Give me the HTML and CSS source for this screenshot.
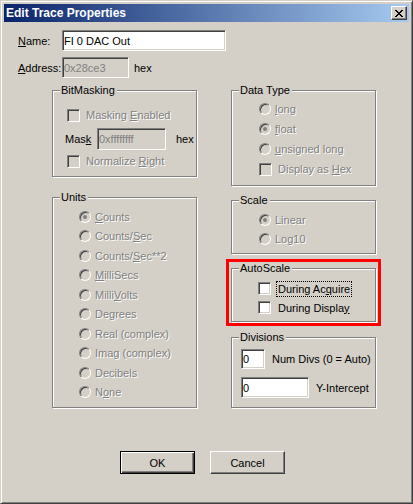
FILE: index.html
```html
<!DOCTYPE html>
<html lang="en">
  <head>
    <meta charset="UTF-8" />
    <title>Edit Trace Properties</title>
    <link rel="stylesheet" href="styles.css">
  </head>
  <body>
    <!-- dialog window -->
    <div class="window">
      <div class="caption">
        <span class="caption-title">Edit Trace Properties</span>
        <span class="caption-close">
          <svg width="8" height="7" viewBox="0 0 8 7" shape-rendering="crispEdges">
            <rect x="0" y="0" width="2" height="1" />
            <rect x="6" y="0" width="2" height="1" />
            <rect x="1" y="1" width="2" height="1" />
            <rect x="5" y="1" width="2" height="1" />
            <rect x="2" y="2" width="4" height="1" />
            <rect x="3" y="3" width="2" height="1" />
            <rect x="2" y="4" width="4" height="1" />
            <rect x="1" y="5" width="2" height="1" />
            <rect x="5" y="5" width="2" height="1" />
            <rect x="0" y="6" width="2" height="1" />
            <rect x="6" y="6" width="2" height="1" />
          </svg>
        </span>
      </div>

      <div class="dialog">
        <!-- name / address -->
        <div class="field-row">
          <span class="field-label"><u>N</u>ame:</span>
          <span class="edit name-edit">FI 0 DAC Out</span>
        </div>
        <div class="field-row address-row">
          <span class="field-label"><u>A</u>ddress:</span>
          <span class="edit edit-off address-edit">0x28ce3</span>
          <span class="unit">hex</span>
        </div>

        <!-- group boxes -->
        <div class="groups">
          <div class="col">
            <div class="group bitmask">
              <span class="legend">BitMasking</span>
              <div class="opt off">
                <span class="check"></span>
                <span class="opt-text">Masking <u>E</u>nabled</span>
              </div>
              <div class="mask-row">
                <span class="mask-label">Mas<u>k</u></span>
                <span class="edit edit-off mask-edit">0xffffffff</span>
                <span class="unit">hex</span>
              </div>
              <div class="opt off last">
                <span class="check"></span>
                <span class="opt-text">Normalize <u>R</u>ight</span>
              </div>
            </div>

            <div class="group units">
              <span class="legend">Units</span>
              <div class="opt off"><span class="radio on"></span><span class="opt-text"><u>C</u>ounts</span></div>
              <div class="opt off"><span class="radio"></span><span class="opt-text">Counts/<u>S</u>ec</span></div>
              <div class="opt off"><span class="radio"></span><span class="opt-text">Counts/<u>S</u>ec**2</span></div>
              <div class="opt off"><span class="radio"></span><span class="opt-text"><u>M</u>illiSecs</span></div>
              <div class="opt off"><span class="radio"></span><span class="opt-text">Milli<u>V</u>olts</span></div>
              <div class="opt off"><span class="radio"></span><span class="opt-text">Degrees</span></div>
              <div class="opt off"><span class="radio"></span><span class="opt-text">Real (complex)</span></div>
              <div class="opt off"><span class="radio"></span><span class="opt-text">Imag (complex)</span></div>
              <div class="opt off"><span class="radio"></span><span class="opt-text">Decibels</span></div>
              <div class="opt off"><span class="radio"></span><span class="opt-text">N<u>o</u>ne</span></div>
            </div>
          </div>

          <div class="col">
            <div class="group datatype">
              <span class="legend">Data Type</span>
              <div class="opt off"><span class="radio"></span><span class="opt-text"><u>l</u>ong</span></div>
              <div class="opt off"><span class="radio on"></span><span class="opt-text"><u>f</u>loat</span></div>
              <div class="opt off"><span class="radio"></span><span class="opt-text"><u>u</u>nsigned long</span></div>
              <div class="opt off"><span class="check"></span><span class="opt-text">Display as <u>H</u>ex</span></div>
            </div>

            <div class="group scale">
              <span class="legend">Scale</span>
              <div class="opt off"><span class="radio on"></span><span class="opt-text">Linear</span></div>
              <div class="opt off"><span class="radio"></span><span class="opt-text">Log10</span></div>
            </div>

            <!-- highlighted box (red frame) -->
            <div class="group autoscale">
              <span class="legend">AutoScale</span>
              <div class="opt"><span class="check"></span><span class="opt-text focus">During Ac<u>q</u>uire</span></div>
              <div class="opt"><span class="check"></span><span class="opt-text">During Displa<u>y</u></span></div>
            </div>

            <div class="group divisions">
              <span class="legend">Divisions</span>
              <div class="div-row">
                <span class="edit divs-edit">0</span>
                <span class="div-text">Num Divs (0 = Auto)</span>
              </div>
              <div class="div-row second">
                <span class="edit icpt-edit">0</span>
                <span class="div-text">Y-Intercept</span>
              </div>
            </div>
          </div>
        </div>

        <!-- buttons -->
        <div class="buttons">
          <span class="btn default">OK</span>
          <span class="btn">Cancel</span>
        </div>
      </div>
    </div>
  </body>
</html>
```
FILE: styles.css
```css
/* reset */
html,
body {
  margin: 0;
  padding: 0;
}

body {
  background-color: #d4d0c8;
  font-family: "Liberation Sans", Arial, sans-serif;
  font-size: 11px;
  color: #000;
}

/* window frame */
.window {
  box-sizing: border-box;
  width: 413px;
  height: 504px;
  padding: 3px;
  border: 1px solid;
  border-color: #d4d0c8 #404040 #404040 #d4d0c8;
  box-shadow: inset 1px 1px #fff, inset -1px -1px #808080;
  background-color: #d4d0c8;
}

/* title bar */
.caption {
  display: flex;
  align-items: center;
  justify-content: space-between;
  height: 18px;
  padding: 0 2px;
  background: linear-gradient(to right, #0a246a, #a6caf0);
}

.caption-title {
  color: #fff;
  font-weight: bold;
  font-size: 12px;
}

.caption-close {
  box-sizing: border-box;
  display: flex;
  align-items: center;
  justify-content: center;
  width: 16px;
  height: 14px;
  border: 1px solid;
  border-color: #fff #404040 #404040 #fff;
  box-shadow: inset -1px -1px #808080;
  background-color: #d4d0c8;
}

.caption-close svg {
  fill: #000;
}

/* dialog body */
.dialog {
  padding: 8px 0 0 14px;
}

.field-row {
  display: flex;
  align-items: center;
  height: 21px;
}

.address-row {
  margin-top: 6px;
}

.field-label {
  width: 44px;
}

.unit {
  margin-left: 5px;
}

/* sunken edit box */
.edit {
  box-sizing: border-box;
  display: flex;
  align-items: center;
  height: 21px;
  padding: 0 1px;
  border: 1px solid;
  border-color: #808080 #fff #fff #808080;
  box-shadow: inset 1px 1px #404040, inset -1px -1px #d4d0c8;
  background-color: #fff;
  white-space: nowrap;
}

.edit-off {
  background-color: #d4d0c8;
  color: #808080;
}

.name-edit {
  width: 164px;
}

.address-edit {
  width: 67px;
}

/* group boxes */
.groups {
  display: grid;
  grid-template-columns: 145px 145px;
  column-gap: 34px;
  margin: 12px 0 0 34px;
}

.col {
  display: flex;
  flex-direction: column;
}

.group {
  box-sizing: border-box;
  position: relative;
  border: 1px solid #808080;
  box-shadow: inset 1px 1px #fff, 1px 1px #fff;
}

.legend {
  position: absolute;
  top: -7px;
  left: 7px;
  padding: 0 2px 0 1px;
  line-height: 13px;
  background-color: #d4d0c8;
}

/* check / radio rows */
.opt {
  display: flex;
  align-items: center;
  height: 16px;
}

.opt-text {
  margin-left: 6px;
  white-space: nowrap;
}

.off .opt-text {
  color: #808080;
  text-shadow: 1px 1px 0 #fff;
}

.check {
  box-sizing: border-box;
  flex: none;
  width: 13px;
  height: 13px;
  border: 1px solid;
  border-color: #808080 #fff #fff #808080;
  box-shadow: inset 1px 1px #404040, inset -1px -1px #d4d0c8;
  background-color: #fff;
}

.off .check {
  background-color: #d4d0c8;
}

.radio {
  box-sizing: border-box;
  position: relative;
  flex: none;
  width: 12px;
  height: 12px;
  border: 1px solid;
  border-color: #808080 #fff #fff #808080;
  border-radius: 50%;
  box-shadow: inset 1px 1px #404040, inset -1px -1px #d4d0c8;
  background-color: #d4d0c8;
}

.radio + .opt-text {
  margin-left: 4px;
}

.radio.on::after {
  content: '';
  position: absolute;
  top: 3px;
  left: 3px;
  width: 4px;
  height: 4px;
  border-radius: 50%;
  background-color: #808080;
}

/* BitMasking */
.bitmask {
  height: 87px;
  padding: 16px 0 0 14px;
}

.mask-row {
  display: flex;
  align-items: center;
  height: 22px;
  margin: 5px 0 0 -2px;
}

.mask-label {
  width: 32px;
}

.mask-edit {
  width: 69px;
  height: 22px;
}

.mask-row .unit {
  margin-left: 10px;
}

.bitmask .last {
  margin-top: 3px;
}

/* Units */
.units {
  height: 211px;
  margin-top: 20px;
  padding: 9px 0 0 26px;
}

.units .opt {
  height: 19.5px;
}

/* Data Type */
.datatype {
  height: 96px;
  padding: 8px 0 0 27px;
}

.datatype .opt {
  height: 20px;
}

/* Scale */
.scale {
  height: 54px;
  margin-top: 14px;
  padding: 9px 0 0 27px;
}

.scale .opt,
.autoscale .opt {
  height: 19px;
}

/* AutoScale + red frame */
.autoscale {
  height: 54px;
  margin-top: 14px;
  padding: 10px 0 0 26px;
}

.autoscale::after {
  content: '';
  position: absolute;
  top: -10px;
  left: -6px;
  right: -6px;
  bottom: -5px;
  border: 3px solid #ff0000;
}

.autoscale .opt-text {
  margin-left: 5px;
  padding: 0 1px;
  line-height: 14px;
  border: 1px solid transparent;
}

.autoscale .focus {
  border: 1px dotted #000;
}

/* Divisions */
.divisions {
  height: 71px;
  margin-top: 15px;
  padding: 11px 0 0 9px;
}

.div-row {
  display: flex;
  align-items: center;
}

.div-row.second {
  margin-top: 8px;
}

.divs-edit {
  width: 24px;
  height: 20px;
}

.icpt-edit {
  width: 68px;
  height: 21px;
}

.div-text {
  margin-left: 7px;
}

/* buttons */
.buttons {
  display: flex;
  gap: 15px;
  margin: 43px 0 0 102px;
}

.btn {
  box-sizing: border-box;
  display: flex;
  align-items: center;
  justify-content: center;
  width: 75px;
  height: 23px;
  border: 1px solid;
  border-color: #fff #404040 #404040 #fff;
  box-shadow: inset -1px -1px #808080;
}

.btn.default {
  border-color: #000;
  box-shadow: inset 1px 1px #fff, inset -1px -1px #404040, inset -2px -2px #808080;
}
```
